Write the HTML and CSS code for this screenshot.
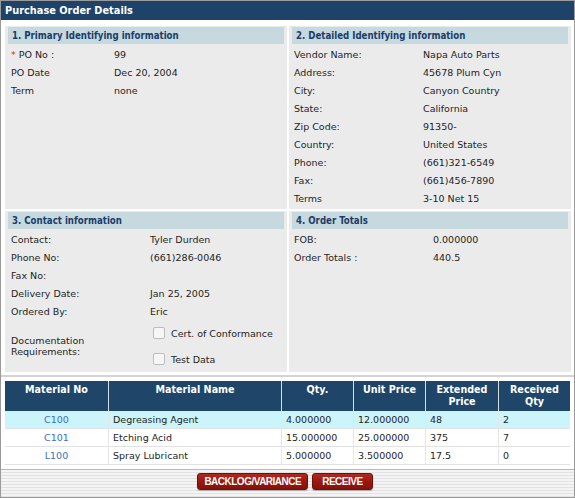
FILE: index.html
```html
<!DOCTYPE html>
<html>
<head>
<meta charset="utf-8">
<link rel="stylesheet" href="styles.css">
</head>
<body>
<div class="window">
  <div class="titlebar">Purchase Order Details</div>
  <div class="panels">
    <section class="panel">
      <h2 class="panel-head">1. Primary Identifying information</h2>
      <div class="fields cols-p1">
        <div class="lbl"><span class="req">*</span>PO No :</div><div class="val">99</div>
        <div class="lbl">PO Date</div><div class="val">Dec 20, 2004</div>
        <div class="lbl">Term</div><div class="val">none</div>
      </div>
    </section>
    <section class="panel">
      <h2 class="panel-head">2. Detailed Identifying information</h2>
      <div class="fields cols-p2">
        <div class="lbl">Vendor Name:</div><div class="val">Napa Auto Parts</div>
        <div class="lbl">Address:</div><div class="val">45678 Plum Cyn</div>
        <div class="lbl">City:</div><div class="val">Canyon Country</div>
        <div class="lbl">State:</div><div class="val">California</div>
        <div class="lbl">Zip Code:</div><div class="val">91350-</div>
        <div class="lbl">Country:</div><div class="val">United States</div>
        <div class="lbl">Phone:</div><div class="val">(661)321-6549</div>
        <div class="lbl">Fax:</div><div class="val">(661)456-7890</div>
        <div class="lbl">Terms</div><div class="val">3-10 Net 15</div>
      </div>
    </section>
    <section class="panel">
      <h2 class="panel-head">3. Contact information</h2>
      <div class="fields cols-p3 rows-contact">
        <div class="lbl">Contact:</div><div class="val">Tyler Durden</div>
        <div class="lbl">Phone No:</div><div class="val">(661)286-0046</div>
        <div class="lbl">Fax No:</div><div class="val"></div>
        <div class="lbl">Delivery Date:</div><div class="val">Jan 25, 2005</div>
        <div class="lbl">Ordered By:</div><div class="val">Eric</div>
        <div class="lbl lbl-multi">Documentation<br>Requirements:</div>
        <div class="val checks">
          <div class="check"><span class="box"></span>Cert. of Conformance</div>
          <div class="check"><span class="box"></span>Test Data</div>
        </div>
      </div>
    </section>
    <section class="panel">
      <h2 class="panel-head">4. Order Totals</h2>
      <div class="fields cols-p4">
        <div class="lbl">FOB:</div><div class="val">0.000000</div>
        <div class="lbl">Order Totals :</div><div class="val">440.5</div>
      </div>
    </section>
  </div>
  <div class="items">
    <table class="grid">
      <colgroup>
        <col class="c1"><col class="c2"><col class="c3"><col class="c4"><col class="c5"><col class="c6">
      </colgroup>
      <thead>
        <tr><th>Material No</th><th>Material Name</th><th>Qty.</th><th>Unit Price</th><th>Extended<br>Price</th><th>Received<br>Qty</th></tr>
      </thead>
      <tbody>
        <tr class="sel"><td class="mat">C100</td><td>Degreasing Agent</td><td>4.000000</td><td>12.000000</td><td>48</td><td>2</td></tr>
        <tr><td class="mat">C101</td><td>Etching Acid</td><td>15.000000</td><td>25.000000</td><td>375</td><td>7</td></tr>
        <tr><td class="mat">L100</td><td>Spray Lubricant</td><td>5.000000</td><td>3.500000</td><td>17.5</td><td>0</td></tr>
      </tbody>
    </table>
  </div>
  <div class="footer">
    <button class="btn btn-wide">BACKLOG/VARIANCE</button>
    <button class="btn">RECEIVE</button>
  </div>
</div>
</body>
</html>
```
FILE: styles.css
```css
html, body {
  margin: 0;
  padding: 0;
  background: #ffffff;
}
.window {
  box-sizing: border-box;
  width: 575px;
  height: 498px;
  border: 1px solid #9a9a9a;
  display: flex;
  flex-direction: column;
  font-family: "DejaVu Sans", Verdana, sans-serif;
  font-size: 9.5px;
  color: #1e1e1e;
  background: #ffffff;
}
.titlebar {
  height: 19px;
  line-height: 19px;
  padding-left: 4px;
  background: #1e436a;
  color: #ffffff;
  font-weight: bold;
  font-size: 9.8px;
}
.panels {
  display: grid;
  grid-template-columns: 282px 282px;
  column-gap: 2px;
  row-gap: 2px;
  padding: 6px 0 0 4px;
}
.panel {
  background: #ebebeb;
  padding: 1px 3px 2px 3px;
}
.panel-head {
  margin: 0;
  height: 17px;
  line-height: 17px;
  padding-left: 4px;
  background: #c6d9de;
  color: #1b3d6b;
  font-family: "DejaVu Sans Condensed", "DejaVu Sans", sans-serif;
  font-stretch: condensed;
  font-size: 9.6px;
  font-weight: bold;
}
.fields {
  display: grid;
  grid-auto-rows: 18px;
  align-items: center;
  margin-top: 1px;
}
.rows-contact {
  grid-template-rows: repeat(5, 18px) 50px;
}
.cols-p1 { grid-template-columns: 106px 1fr; }
.cols-p2 { grid-template-columns: 131px 1fr; }
.cols-p3 { grid-template-columns: 142px 1fr; }
.cols-p4 { grid-template-columns: 141px 1fr; }
.lbl {
  padding-left: 3px;
  white-space: nowrap;
}
.cols-p2 .lbl, .cols-p4 .lbl { padding-left: 2px; }
.req {
  color: #e0261f;
  margin-right: 3px;
}
.lbl-multi {
  line-height: 11px;
  padding-top: 1px;
}
.checks {
  align-self: start;
  display: flex;
  flex-direction: column;
}
.check {
  height: 26px;
  display: flex;
  align-items: center;
  padding-left: 3px;
  white-space: nowrap;
}
.box {
  box-sizing: border-box;
  width: 12px;
  height: 12px;
  border: 1px solid #bdbdbd;
  border-radius: 2px;
  background: #f6f6f6;
  margin-right: 6px;
}
.items {
  margin-top: 3px;
  border-top: 2px solid #d3d3d3;
  padding: 4px 4px 4px 4px;
}
.grid {
  border-collapse: separate;
  border-spacing: 0;
  width: 565px;
  table-layout: fixed;
}
.c1 { width: 104px; }
.c2 { width: 173px; }
.c3 { width: 72px; }
.c4 { width: 72px; }
.c5 { width: 73px; }
.c6 { width: 71px; }
.grid th {
  box-sizing: border-box;
  height: 30px;
  background: #1f4569;
  color: #ffffff;
  font-weight: bold;
  font-size: 9.6px;
  line-height: 12px;
  padding: 3px 2px 3px;
  vertical-align: top;
  text-align: center;
  border-right: 1px solid #d5dde6;
}
.grid th:last-child, .grid td:last-child { border-right: none; }
.grid td {
  line-height: 16px;
  padding: 1px 4px 0;
  border-right: 1px solid #e6e6e6;
  border-bottom: 1px solid #e2e2e2;
  white-space: nowrap;
}
.grid tr.sel td { background: #ccf4fb; }
.grid td.mat {
  text-align: center;
  color: #3a6fc6;
}
.footer {
  flex: 1;
  border-top: 1px solid #b8b8b8;
  background: repeating-linear-gradient(to bottom, #f4f4f4 0, #f4f4f4 2px, #e2e2e2 2px, #e2e2e2 3px);
  display: flex;
  justify-content: center;
  align-items: flex-start;
  gap: 4px;
  padding-top: 3px;
  padding-right: 5px;
}
.btn {
  height: 17px;
  padding: 0 9px;
  border: 1px solid #6e0f09;
  border-radius: 3px;
  background: linear-gradient(to bottom, #b0281e 0%, #98170f 55%, #86120b 100%);
  color: #ffffff;
  font-family: "Liberation Sans", Arial, sans-serif;
  font-weight: bold;
  font-size: 10px;
  letter-spacing: -0.5px;
  line-height: 15px;
  box-shadow: 0 1px 1px rgba(0,0,0,0.25);
}
.btn-wide {
  padding: 0 6px;
}
```
